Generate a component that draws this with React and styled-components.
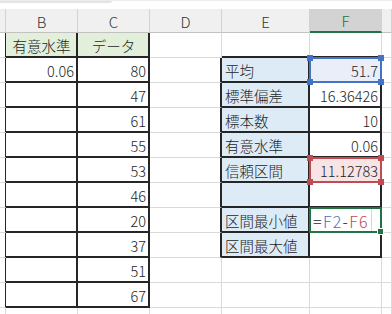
import React from 'react';
import styled, { createGlobalStyle } from 'styled-components';

const GRID = '#dadada';
const INK = '#1e1e1e';
const RULE = '#262626';

const GlobalStyle = createGlobalStyle`
  html, body {
    margin: 0;
    padding: 0;
    background: #fff;
  }
  body {
    font-family: "Noto Sans CJK JP", "Noto Sans", sans-serif;
    font-weight: 300;
    overflow: hidden;
  }
`;

const Sheet = styled.div`
  width: 392px;
  height: 314px;
  overflow: hidden;
  background: #fff;
`;

const TopStrip = styled.div`
  height: 9px;
  display: flex;
  align-items: flex-start;
  border-top: 1px solid #ececec;
  box-sizing: border-box;

  > span {
    width: 112px;
    height: 2px;
    background: #e4e4e4;
    border-bottom-right-radius: 3px;
  }
`;

const Grid = styled.div`
  display: grid;
  grid-template-columns: 6px 72px 72px 72px 88px 72px 1fr;
  grid-template-rows: 24px repeat(12, 25px);
`;

const ColHead = styled.div`
  box-sizing: border-box;
  display: flex;
  align-items: center;
  justify-content: center;
  padding-top: 1px;
  font-size: 15px;
  background: ${p => (p.$active ? '#d3d3d3' : '#f0f0f0')};
  color: ${p => (p.$active ? '#217346' : '#333')};
  border-right: 1px solid #d2d2d2;
  border-bottom: ${p => (p.$active ? '2px solid #217346' : '1px solid #c2c2c2')};
`;

const Cell = styled.div`
  box-sizing: border-box;
  position: relative;
  display: flex;
  align-items: center;
  justify-content: ${p =>
    p.$align === 'right' ? 'flex-end' : p.$align === 'center' ? 'center' : 'flex-start'};
  padding: 2px 2px 0 3px;
  font-size: 14.5px;
  color: ${INK};
  white-space: nowrap;
  background: ${p => p.$bg || '#fff'};
  border-right: ${p => (p.$r ? `2px solid ${RULE}` : `1px solid ${GRID}`)};
  border-bottom: ${p => (p.$b ? `2px solid ${RULE}` : `1px solid ${GRID}`)};
`;

const Frame = styled.div`
  position: absolute;
  top: -1px;
  left: -1px;
  right: -2px;
  bottom: -2px;
  border: 2px solid ${p => p.$color};
  pointer-events: none;
  z-index: 2;
`;

const Handle = styled.span`
  position: absolute;
  width: 6px;
  height: 6px;
  background: ${p => p.$color};
  ${p => (p.$v === 't' ? 'top: -4px;' : 'bottom: -4px;')}
  ${p => (p.$h === 'l' ? 'left: -4px;' : 'right: -4px;')}
`;

const FillHandle = styled.span`
  position: absolute;
  right: -4px;
  bottom: -4px;
  width: 5px;
  height: 5px;
  background: #217346;
  border: 1px solid #fff;
`;

const Formula = styled.span`
  font-size: 16px;
  letter-spacing: 1.3px;
`;

const Caret = styled.span`
  align-self: stretch;
  width: 1px;
  margin: -1px 0 0 2px;
  background: #d6d6d6;
`;

const Ref = styled.span`
  color: ${p => p.$color || INK};
`;

const BLUE_REF = '#4472c4';
const RED_REF = '#bf4b53';
const GREEN = '#217346';

const headers = ['', 'B', 'C', 'D', 'E', 'F', ''];
const ACTIVE_COL = 5;

const values = ['80', '47', '61', '55', '53', '46', '20', '37', '51', '67'];
const labels = ['平均', '標準偏差', '標本数', '有意水準', '信頼区間', '', '区間最小値', '区間最大値'];
const results = ['51.7', '16.36426', '10', '0.06', '11.12783', '', '', ''];

// bordered blocks: [firstRow, lastRow, firstCol, lastCol]
const blocks = [
  [1, 11, 1, 2],
  [2, 9, 4, 5],
];

const inBlock = (r, c) =>
  blocks.some(([r0, r1, c0, c1]) => r >= r0 && r <= r1 && c >= c0 && c <= c1);

function FrameBox({ color, fill }) {
  return (
    <Frame $color={color}>
      {fill ? (
        <FillHandle />
      ) : (
        <>
          <Handle $color={color} $v="t" $h="l" />
          <Handle $color={color} $v="t" $h="r" />
          <Handle $color={color} $v="b" $h="l" />
          <Handle $color={color} $v="b" $h="r" />
        </>
      )}
    </Frame>
  );
}

function cellContent(r, c) {
  if (c === 1 && r === 1) return { text: '有意水準', align: 'center', bg: '#e2efda' };
  if (c === 2 && r === 1) return { text: 'データ', align: 'center', bg: '#e2efda' };
  if (c === 1 && r === 2) return { text: '0.06', align: 'right' };
  if (c === 2 && r >= 2 && r <= 11) return { text: values[r - 2], align: 'right' };
  if (c === 4 && r >= 2 && r <= 9) return { text: labels[r - 2], align: 'left', bg: '#ddebf7' };
  if (c === 5 && r >= 2 && r <= 9) {
    const cell = { text: results[r - 2], align: 'right' };
    if (r === 2) return { ...cell, bg: '#e9eef8', frame: BLUE_REF };
    if (r === 6) return { ...cell, bg: '#f8e4e5', frame: RED_REF };
    if (r === 8) return { ...cell, align: 'left', formula: true };
    return cell;
  }
  return { text: '' };
}

export default function App() {
  const rows = [];
  for (let r = 1; r <= 12; r++) {
    for (let c = 0; c < 7; c++) {
      const info = cellContent(r, c);
      const right = inBlock(r, c) || inBlock(r, c + 1);
      const bottom = inBlock(r, c) || inBlock(r + 1, c);
      rows.push(
        <Cell key={`${r}-${c}`} $align={info.align} $bg={info.bg} $r={right} $b={bottom}>
          {info.formula ? (
            <>
              <Formula>
                <Ref>=</Ref>
                <Ref $color={BLUE_REF}>F2</Ref>
                <Ref>-</Ref>
                <Ref $color={RED_REF}>F6</Ref>
              </Formula>
              <Caret />
              <FrameBox color={GREEN} fill />
            </>
          ) : (
            info.text
          )}
          {info.frame && <FrameBox color={info.frame} />}
        </Cell>
      );
    }
  }

  return (
    <Sheet>
      <GlobalStyle />
      <TopStrip>
        <span />
      </TopStrip>
      <Grid>
        {headers.map((h, i) => (
          <ColHead key={i} $active={i === ACTIVE_COL}>
            {h}
          </ColHead>
        ))}
        {rows}
      </Grid>
    </Sheet>
  );
}
